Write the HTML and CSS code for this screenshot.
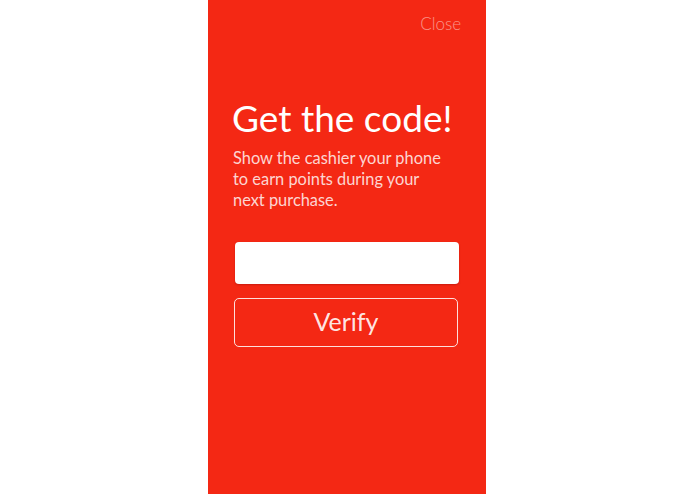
FILE: index.html
```html
<!DOCTYPE html>
<html>
<head>
<meta charset="utf-8">
<link rel="stylesheet" href="styles.css">
</head>
<body>
<div class="stage">
  <div class="panel">
    <div class="topbar"><span class="close">Close</span></div>
    <h1 class="title">Get the code!</h1>
    <p class="subtitle">Show the cashier your phone<br>to earn points during your<br>next purchase.</p>
    <div class="field"></div>
    <button class="verify">Verify</button>
  </div>
</div>
</body>
</html>
```
FILE: styles.css
```css
html, body {
  margin: 0;
  padding: 0;
  background: #ffffff;
  font-family: Lato, "Open Sans", sans-serif;
}
.stage {
  display: flex;
  height: 494px;
  padding-left: 208px;
  box-sizing: border-box;
}
.panel {
  width: 278px;
  height: 494px;
  background: #f42814;
  box-sizing: border-box;
  padding: 0 27px 0 26px;
  display: flex;
  flex-direction: column;
}
.topbar {
  display: flex;
  justify-content: flex-end;
  padding-top: 13px;
  margin-right: -2px;
}
.close {
  font-size: 17px;
  font-weight: 300;
  color: rgba(255, 255, 255, 0.5);
  line-height: 22px;
}
.title {
  margin: 62px 0 0 -2px;
  font-size: 37px;
  font-weight: 400;
  color: #ffffff;
  line-height: 42px;
  white-space: nowrap;
}
.subtitle {
  margin: 8px 0 0 -1px;
  font-size: 16.4px;
  line-height: 21px;
  color: rgba(255, 255, 255, 0.82);
  white-space: nowrap;
}
.field {
  margin-top: 32px;
  margin-left: 1px;
  height: 42px;
  background: #ffffff;
  border-radius: 4px;
  box-shadow: 0 1px 2px rgba(120, 0, 0, 0.35);
}
.verify {
  margin-top: 14px;
  height: 49px;
  margin-right: 1px;
  background: transparent;
  border: 1.5px solid rgba(255, 255, 255, 0.85);
  border-radius: 5px;
  color: rgba(255, 255, 255, 0.9);
  font-family: Lato, "Open Sans", sans-serif;
  font-size: 25px;
  font-weight: 400;
  padding: 0 0 4px 0;
}
```
